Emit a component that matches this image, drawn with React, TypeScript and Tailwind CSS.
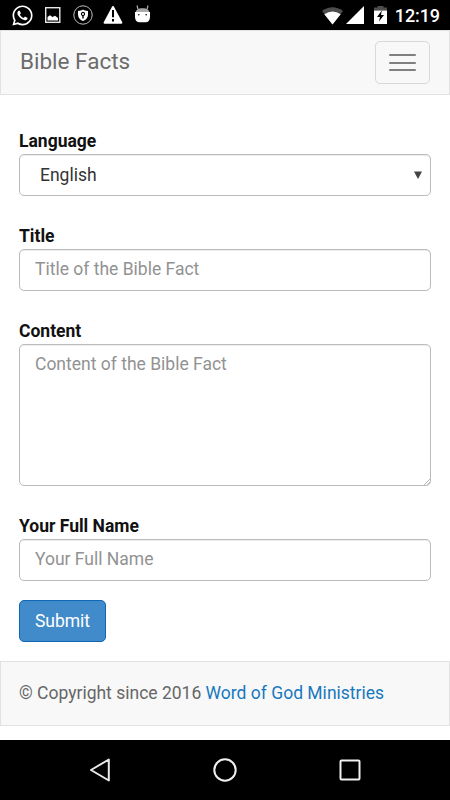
import React from "react";
import { FaWhatsapp } from "react-icons/fa";

function StatusBar() {
  return (
    <div className="flex h-[30px] items-center bg-black pl-[11px] pr-[10px] text-white">
      <FaWhatsapp className="size-[23px]" />
      <svg className="ml-[10px] size-[18px]" viewBox="0 0 18 18" fill="none">
        <rect x="1.7" y="1.7" width="14.1" height="14.6" stroke="#e8e8e8" strokeWidth="1.4" />
        <path d="M3.5 14.5V11L6 9.3L8.5 11L11 9.8L14 12V14.5Z" fill="#fff" />
      </svg>
      <svg className="ml-[10.5px] size-[20px]" viewBox="0 0 20 20" fill="none">
        <circle cx="10" cy="10" r="9.2" stroke="#bdbdbd" strokeWidth="1" />
        <path d="M10 4.6C8.6 5.7 6.8 6 5 6V9.5C5 12.6 7 14.8 10 16C13 14.8 15 12.6 15 9.5V6C13.2 6 11.4 5.7 10 4.6Z" fill="#fff" />
        <circle cx="10" cy="9" r="1.6" stroke="#000" strokeWidth="1.1" />
        <path d="M10 10.5V13.5" stroke="#000" strokeWidth="1.4" />
      </svg>
      <svg className="ml-[10px] h-[20px] w-[20px]" viewBox="0 0 20 20">
        <path d="M10 2L18.4 17.7H1.6Z" fill="#fff" stroke="#fff" strokeWidth="2" strokeLinejoin="round" />
        <path d="M10 5V12.3M10 14V16.5" stroke="#000" strokeWidth="2" />
      </svg>
      <svg className="ml-[11.5px] h-[20px] w-[17px]" viewBox="0 0 17 20">
        <path d="M4 4.5L3 0.5M13 4.5L14 0.5" stroke="#aaa" strokeWidth="1.2" />
        <path d="M1.5 7.5C2 5 4 3.2 8.5 3.2S15 5 15.5 7.5Z" fill="#aaa" />
        <path d="M1 7H16V12C16 15.5 14 17.2 11.5 17.2H5.5C3 17.2 1 15.5 1 12Z" fill="#fff" />
        <circle cx="4.8" cy="9.7" r="0.8" fill="#000" />
        <circle cx="12.2" cy="9.7" r="0.8" fill="#000" />
      </svg>
      <svg className="ml-auto h-[19px] w-[23px]" viewBox="0 0 23 19">
        <path d="M1 5Q11.5 -2.5 22 5L11.5 18.5Z" fill="#4d4d4d" />
        <path d="M3.3 8.3Q11.5 2.5 19.7 8.3L11.5 18.5Z" fill="#fff" />
      </svg>
      <svg className="ml-[2px] size-[18px]" viewBox="0 0 18 18">
        <path d="M18 0V18H0Z" fill="#fff" />
      </svg>
      <svg className="ml-[10px] h-[18px] w-[13px]" viewBox="0 0 13 18">
        <path d="M3.5 0H9.5V1.5H13V4.5H0V1.5H3.5Z" fill="#4d4d4d" />
        <path d="M0 4.5H13V18H0Z" fill="#fff" />
        <path d="M7.8 4.5L3 11H6L5 15.5L10 9H7Z" fill="#000" />
      </svg>
      <span className="ml-[8px] pt-[2px] text-[18px] leading-[28px] font-medium tracking-[-0.1px]">12:19</span>
    </div>
  );
}

function Navbar() {
  return (
    <header className="flex h-[65px] items-center justify-between border border-[#e2e2e2] bg-[#f8f8f8] pl-[19px] pr-[19px]">
      <span className="pb-[3px] text-[22.5px] leading-[25px] text-[#6b6b6b]">Bible Facts</span>
      <button
        type="button"
        aria-label="Toggle navigation"
        className="flex h-[43px] w-[55px] flex-col items-center justify-center gap-[5.5px] rounded-[5px] border border-[#d8d8d8]"
      >
        <span className="h-[2px] w-[27px] rounded-[1px] bg-[#808080]" />
        <span className="h-[2px] w-[27px] rounded-[1px] bg-[#808080]" />
        <span className="h-[2px] w-[27px] rounded-[1px] bg-[#808080]" />
      </button>
    </header>
  );
}

function Field({ label, children }: { label: string; children: React.ReactNode }) {
  return (
    <label className="flex flex-col">
      <span className="h-[26px] leading-[27px] font-bold text-[#111]">{label}</span>
      {children}
    </label>
  );
}

function SelectArrow() {
  return (
    <svg className="h-[8px] w-[8px]" viewBox="0 0 8 8">
      <path d="M0 0.5H8L4 8Z" fill="#444" />
    </svg>
  );
}

function ResizeGrip() {
  return (
    <svg className="absolute right-[1px] bottom-[1px] size-[6px]" viewBox="0 0 6 6" stroke="#aaa" strokeWidth="0.8">
      <path d="M0 6L6 0M3 6L6 3" />
    </svg>
  );
}

export default function App() {
  return (
    <div className="flex h-[800px] w-[450px] flex-col bg-white font-['Roboto',sans-serif] text-[17.5px]">
      <StatusBar />
      <Navbar />
      <form className="flex flex-col gap-[27px] px-[19px] pt-[33px]">
        <Field label="Language">
          <div className="flex h-[42px] items-center justify-between rounded-[5px] border border-[#bbb] pl-5 pr-[8px] text-[#333] shadow-[inset_0_1px_1px_rgba(0,0,0,0.075)]">
            <span className="leading-[40px]">English</span>
            <SelectArrow />
          </div>
        </Field>
        <Field label="Title">
          <input
            className="h-[42px] rounded-[5px] border border-[#bbb] px-[15px] pb-[2px] shadow-[inset_0_1px_1px_rgba(0,0,0,0.075)] placeholder:text-[#929292]"
            placeholder="Title of the Bible Fact"
          />
        </Field>
        <Field label="Content">
          <div className="relative flex">
            <textarea
              className="h-[142px] w-full resize-none rounded-[5px] border border-[#bbb] px-[15px] py-[7px] leading-[25px] shadow-[inset_0_1px_1px_rgba(0,0,0,0.075)] placeholder:text-[#929292]"
              placeholder="Content of the Bible Fact"
            />
            <ResizeGrip />
          </div>
        </Field>
        <Field label="Your Full Name">
          <input
            className="h-[42px] rounded-[5px] border border-[#bbb] px-[15px] pb-[2px] shadow-[inset_0_1px_1px_rgba(0,0,0,0.075)] placeholder:text-[#929292]"
            placeholder="Your Full Name"
          />
        </Field>
        <button
          type="button"
          className="-mt-2 h-[42px] w-[87px] rounded-[5px] border border-[#1068b5] bg-[#428bca] text-white"
        >
          Submit
        </button>
      </form>
      <footer className="mt-[19px] flex h-[65px] items-center border border-[#e2e2e2] bg-[#f8f8f8] px-[18px] text-[#666]">
        <p>
          © Copyright since 2016 <a className="text-[#1878be]">Word of God Ministries</a>
        </p>
      </footer>
      <nav className="mt-auto flex h-[60px] items-center justify-between bg-black px-[88px]">
        <svg className="size-[24px]" viewBox="0 0 24 24" fill="none">
          <path d="M3 12L20.8 1.5V22.5Z" stroke="#e8e8e8" strokeWidth="2" strokeLinejoin="round" />
        </svg>
        <svg className="size-[24px]" viewBox="0 0 24 24" fill="none">
          <circle cx="12" cy="12" r="10.7" stroke="#f0f0f0" strokeWidth="2" />
        </svg>
        <svg className="size-[24px]" viewBox="0 0 24 24" fill="none">
          <rect x="2.5" y="2.5" width="19" height="19" rx="1" stroke="#f0f0f0" strokeWidth="2" />
        </svg>
      </nav>
    </div>
  );
}
